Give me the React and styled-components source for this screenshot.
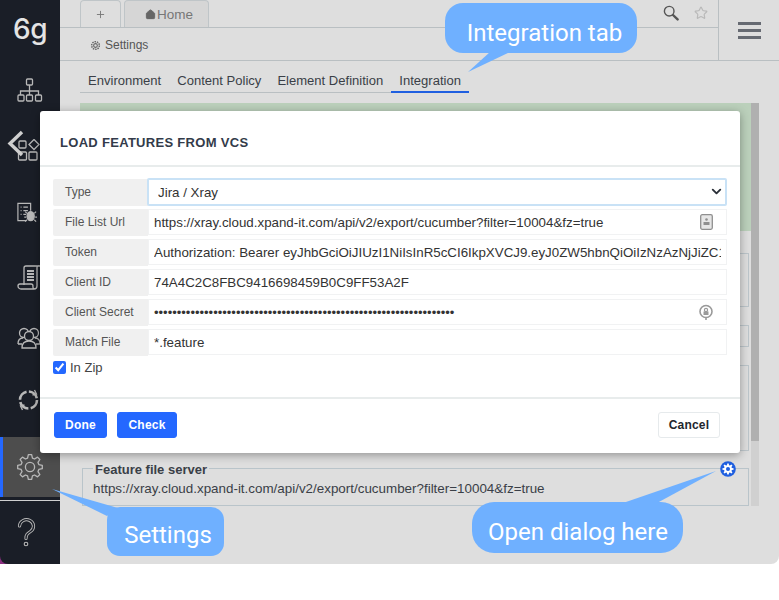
import styled, { createGlobalStyle } from "styled-components"
import { ChevronDown, Home, Plus, Star } from "lucide-react"

const GlobalStyle = createGlobalStyle`
  html, body { margin: 0; padding: 0; background: #fff; }
  body { font-family: "Liberation Sans", Arial, sans-serif; }
  * { box-sizing: border-box; }
`

const fields = [
  { label: "File List Url", value: "https://xray.cloud.xpand-it.com/api/v2/export/cucumber?filter=10004&fz=true", icon: <FileBadgeIcon /> },
  { label: "Token", value: "Authorization: Bearer eyJhbGciOiJIUzI1NiIsInR5cCI6IkpXVCJ9.eyJ0ZW5hbnQiOiIzNzAzNjJiZC1hOTk1" },
  { label: "Client ID", value: "74A4C2C8FBC9416698459B0C9FF53A2F" },
  { label: "Client Secret", value: "•".repeat(66), icon: <SecretIcon />, small: true },
  { label: "Match File", value: "*.feature" },
]

// outline of a cog, 8 teeth by default
function cogPath(teeth, outer, inner, center) {
  const step = (Math.PI * 2) / teeth
  const points = []
  for (let i = 0; i < teeth; i++) {
    const a = i * step - Math.PI / 2
    const at = (r, offset) => `${(center + r * Math.cos(a + offset)).toFixed(2)} ${(center + r * Math.sin(a + offset)).toFixed(2)}`
    points.push(at(inner, -step * 0.34), at(outer, -step * 0.17), at(outer, step * 0.17), at(inner, step * 0.34))
  }
  return `M${points.join("L")}Z`
}

function TreeIcon() {
  return (
    <NavSvg width="26" height="24" viewBox="0 0 26 24">
      <rect x="9.5" y="1" width="6" height="6" rx="1" />
      <path d="M12.5 7v6M3.5 17v-4h18v4M12.5 13v4" />
      <rect x="1" y="17" width="6" height="6" rx="1" />
      <rect x="9.5" y="17" width="6" height="6" rx="1" />
      <rect x="18.5" y="17" width="6" height="6" rx="1" />
    </NavSvg>
  )
}

function BlocksIcon() {
  return (
    <NavSvg width="24" height="24" viewBox="0 0 24 24" $lift={2}>
      <rect x="2" y="2" width="7" height="7" rx="1" />
      <path d="M17 0.5l5 5-5 5-5-5z" />
      <rect x="1.500" y="13" width="8" height="8" rx="1" />
      <rect x="12" y="13" width="8" height="8" rx="1" />
    </NavSvg>
  )
}

function BugDocIcon() {
  return (
    <NavSvg width="20" height="21" viewBox="0 0 22 22" $lift={4}>
      <path d="M15 9V1H1v19h9" />
      <path d="M4 5h1M7 5h5M4 9h1M7 9h5M4 13h1M7 13h3" />
      <ellipse cx="15" cy="15" rx="4" ry="5" fill="#b8b8b8" />
      <path d="M11 12l-2-2M19 12l2-2M10 16H8M20 16h2M11 19l-2 2M19 19l2 2" />
    </NavSvg>
  )
}

function ScrollIcon() {
  return (
    <NavSvg width="24" height="26" viewBox="0 0 24 26" $lift={-4}>
      <path d="M7 20V3a2 2 0 0 1 2-2h14M23 1a2 2 0 0 0-3 2v18a3 3 0 0 1-3 3H4a3 3 0 0 1-3-3 2 2 0 0 1 2-2h11a2 2 0 0 1 2 2 3 3 0 0 0 1 3" />
      <path d="M10 6h7M10 9h7M10 12h7M10 15h7" strokeWidth="1.8" />
    </NavSvg>
  )
}

function UsersIcon() {
  return (
    <NavSvg width="24" height="22" viewBox="0 0 24 22">
      <circle cx="7" cy="6" r="4.500" />
      <circle cx="17" cy="6" r="4.500" />
      <path d="M1 17c0-4 2-6 5-6M23 17c0-4-2-6-5-6M1 17h4M23 17h-4" />
      <circle cx="12" cy="9" r="4.500" fill="#1a1e27" />
      <path d="M5 21c0-5 3-7 7-7s7 2 7 7z" fill="#1a1e27" />
    </NavSvg>
  )
}

function LoopIcon() {
  return (
    <NavSvg width="23" height="22" viewBox="0 0 22 22">
      <circle cx="11" cy="11" r="8.500" strokeWidth="2.6" strokeDasharray="11 2.4" />
      <path d="M17 1l2 4-4 1M5 21l-2-4 4-1" />
    </NavSvg>
  )
}

function GearIcon() {
  return (
    <NavSvg width="26" height="26" viewBox="0 0 26 26">
      <path d={cogPath(8, 12.4, 9.2, 13)} strokeLinejoin="round" />
      <circle cx="13" cy="13" r="4.600" />
    </NavSvg>
  )
}

function HelpIcon() {
  return (
    <svg width="19" height="29" viewBox="0 0 19 29" fill="none" strokeLinecap="round">
      <path d="M2.500 8a7 6.500 0 1 1 11 5.500c-3 2-4.500 3-4.500 7" stroke="#b8b8b8" strokeWidth="3.2" />
      <path d="M2.500 8a7 6.500 0 1 1 11 5.500c-3 2-4.500 3-4.500 7" stroke="#1a1e27" strokeWidth="1.4" />
      <circle cx="9" cy="26" r="1.800" stroke="#b8b8b8" strokeWidth="1.1" />
    </svg>
  )
}

function SmallGearIcon() {
  return (
    <svg width="11" height="11" viewBox="0 0 12 12" fill="none" stroke="#666">
      <circle cx="6" cy="6" r="2" strokeWidth="1.2" />
      <circle cx="6" cy="6" r="4.200" strokeWidth="1.6" strokeDasharray="1.6 1" />
    </svg>
  )
}

function SearchIcon() {
  return (
    <svg width="16" height="16" viewBox="0 0 16 16" fill="none" stroke="#555">
      <circle cx="6.200" cy="6.200" r="4.800" strokeWidth="1.4" />
      <path d="M10 10l4.600 4.400" strokeWidth="2.4" strokeLinecap="round" />
    </svg>
  )
}

function FileBadgeIcon() {
  return (
    <svg width="13" height="16" viewBox="0 0 13 16" fill="#8f8f8f">
      <rect x="0.700" y="0.700" width="11.600" height="14.600" rx="1.500" fill="#e6e6e6" stroke="#8f8f8f" strokeWidth="1.3" />
      <circle cx="6.500" cy="5.500" r="1.300" />
      <rect x="3.500" y="8" width="6" height="3" />
    </svg>
  )
}

function SecretIcon() {
  return (
    <svg width="14" height="17" viewBox="0 0 14 17" fill="none" stroke="#9a9a9a">
      <circle cx="7" cy="7.500" r="6" strokeWidth="1.6" />
      <circle cx="7" cy="6" r="1.600" strokeWidth="1.2" />
      <rect x="4.500" y="7.500" width="5" height="3.500" fill="#9a9a9a" strokeWidth="0" />
      <path d="M7 13v3" strokeWidth="1.6" />
    </svg>
  )
}

function BlueGearIcon() {
  return (
    <svg width="16" height="16" viewBox="0 0 16 16" fill="none">
      <circle cx="8" cy="8" r="7.800" fill="#1f5fe0" />
      <path d={cogPath(8, 5.6, 4, 8)} fill="#fff" />
      <circle cx="8" cy="8" r="2" fill="#1f5fe0" />
    </svg>
  )
}

export default function App() {
  return (
    <>
      <GlobalStyle />
      <Frame>
        <Sidebar>
          <Logo>6g</Logo>
          <NavItem><TreeIcon /></NavItem>
          <NavItem><BlocksIcon /></NavItem>
          <NavItem><BugDocIcon /></NavItem>
          <NavItem><ScrollIcon /></NavItem>
          <NavItem><UsersIcon /></NavItem>
          <NavItem><LoopIcon /></NavItem>
          <NavItem $active><GearIcon /></NavItem>
          <HelpItem><HelpIcon /></HelpItem>
          <Collapse width="18" height="30" viewBox="0 0 18 30">
            <path d="M15 3L3 14.500L15 26" />
          </Collapse>
        </Sidebar>

        <Main>
          <TopBar>
            <TopLeft>
              <TabBar>
                <PageTab $narrow><Plus size={11} /></PageTab>
                <PageTab><Home size={11} fill="#666" stroke="#666" />Home</PageTab>
                <TabTools>
                  <SearchIcon />
                  <Star size={14} color="#b9b9b9" />
                </TabTools>
              </TabBar>
              <Crumb><SmallGearIcon />Settings</Crumb>
            </TopLeft>
            <MenuButton><MenuLine /><MenuLine /><MenuLine /></MenuButton>
          </TopBar>

          <SubNav>
            <SubTab>Environment</SubTab>
            <SubTab>Content Policy</SubTab>
            <SubTab>Element Definition</SubTab>
            <SubTab $active>Integration</SubTab>
          </SubNav>

          <ScrollArea>
            <Content>
              <SuccessBox />
              <GhostBox $height={54} $gap={22} />
              <GhostBox $height={22} $gap={18} />
              <GhostBox $height={86} $gap={18} />
              <FeatureBox>
                <FeatureLegend>Feature file server</FeatureLegend>
                <FeatureUrl>https://xray.cloud.xpand-it.com/api/v2/export/cucumber?filter=10004&amp;fz=true</FeatureUrl>
                <FeatureGear><BlueGearIcon /></FeatureGear>
              </FeatureBox>
            </Content>
            <ScrollTrack><ScrollThumb /></ScrollTrack>
          </ScrollArea>
        </Main>

        <Modal>
          <ModalHeader>LOAD FEATURES FROM VCS</ModalHeader>
          <ModalBody>
            <FormRow>
              <FieldLabel>Type</FieldLabel>
              <SelectWrap>
                <TypeSelect defaultValue="jira">
                  <option value="jira">Jira / Xray</option>
                </TypeSelect>
                <SelectArrow><ChevronDown size={15} strokeWidth={3} color="#2a2f38" /></SelectArrow>
              </SelectWrap>
            </FormRow>
            {fields.map(field => (
              <FormRow key={field.label}>
                <FieldLabel>{field.label}</FieldLabel>
                <InputWrap>
                  <FieldInput readOnly value={field.value} $small={field.small} />
                  {field.icon && <InputIcon>{field.icon}</InputIcon>}
                </InputWrap>
              </FormRow>
            ))}
            <CheckRow>
              <input type="checkbox" defaultChecked />
              In Zip
            </CheckRow>
          </ModalBody>
          <ModalFooter>
            <PrimaryBtn $width={53}>Done</PrimaryBtn>
            <PrimaryBtn $width={60}>Check</PrimaryBtn>
            <CancelBtn>Cancel</CancelBtn>
          </ModalFooter>
        </Modal>

        <Tails viewBox="0 0 779 564" width="779" height="564">
          <polygon points="490,52 510,52 468,72" />
          <polygon points="107,516 118,508 52,489" />
          <polygon points="623,503 657,503 716,471" />
        </Tails>
        <Callout $left={445} $top={3} $width={192} $height={50} $radius={18} $padLeft={7} $padTop={9}>Integration tab</Callout>
        <Callout $left={107} $top={507} $width={117} $height={49} $radius={13} $padLeft={5} $padTop={6}>Settings</Callout>
        <Callout $left={472} $top={502} $width={211} $height={51} $radius={22} $padLeft={1} $padTop={8}>Open dialog here</Callout>
      </Frame>
    </>
  )
}

const Frame = styled.div`
  position: relative;
  display: flex;
  width: 779px;
  height: 564px;
  overflow: hidden;
  background: linear-gradient(90deg, #8a2f80 10px, transparent 10px);
`

const Sidebar = styled.nav`
  position: relative;
  display: flex;
  flex-direction: column;
  flex: none;
  width: 60px;
  border-bottom-left-radius: 8px;
  background: #1a1e27;
`

const Logo = styled.div`
  height: 59px;
  padding-top: 12px;
  font-family: Inter, sans-serif;
  font-size: 28px;
  font-weight: 500;
  line-height: 34px;
  text-align: center;
  letter-spacing: -0.5px;
  color: #e4e4e4;
`

const NavItem = styled.div`
  display: flex;
  align-items: center;
  flex: none;
  height: ${({ $active }) => ($active ? "60px" : "62px")};
  margin-top: ${({ $active }) => ($active ? "6px" : "0")};
  padding-left: ${({ $active }) => ($active ? "14px" : "17px")};
  border-left: ${({ $active }) => ($active ? "3px solid #2468ff" : "none")};
  background: ${({ $active }) => ($active ? "#4d4d4d" : "transparent")};
`

const HelpItem = styled.div`
  display: flex;
  align-items: center;
  flex: 1;
  margin-top: 3px;
  padding-left: 17px;
  border-top: 1px solid #d0d0d0;
`

const NavSvg = styled.svg`
  margin-bottom: ${({ $lift }) => $lift || 0}px;
  fill: none;
  stroke: #b8b8b8;
  stroke-width: 1.3;
`

const Collapse = styled.svg`
  position: absolute;
  left: 7px;
  top: 129px;
  fill: none;
  stroke: #cfcfcf;
  stroke-width: 3.4;
`

const Main = styled.main`
  display: flex;
  flex-direction: column;
  flex: 1;
  min-width: 0;
  border-bottom-right-radius: 8px;
  background: #dedede;
`

const TopBar = styled.header`
  display: flex;
  flex: none;
  height: 61px;
  border-bottom: 1px solid #b9bfc2;
`

const TopLeft = styled.div`
  display: flex;
  flex-direction: column;
  width: 659px;
  border-right: 1px solid #b9bfc2;
`

const TabBar = styled.div`
  display: flex;
  align-items: flex-end;
  gap: 3px;
  height: 28px;
  padding-left: 20px;
  border-bottom: 1px solid #b9bfc2;
`

const PageTab = styled.div`
  display: flex;
  align-items: center;
  justify-content: center;
  gap: 1px;
  width: ${({ $narrow }) => ($narrow ? "41px" : "85px")};
  height: 27px;
  padding-left: ${({ $narrow }) => ($narrow ? "0" : "5px")};
  border: 1px solid #bfc5c8;
  border-bottom: none;
  border-radius: 4px 4px 0 0;
  background: ${({ $narrow }) => ($narrow ? "#dedede" : "#d6d6d6")};
  font-size: 13.5px;
  color: #777;
`

const TabTools = styled.div`
  display: flex;
  align-items: center;
  gap: 15px;
  align-self: flex-start;
  margin-left: auto;
  margin-right: 10px;
  padding-top: 5px;
`

const Crumb = styled.div`
  display: flex;
  align-items: center;
  gap: 4px;
  flex: 1;
  padding: 2px 0 0 30px;
  font-size: 12px;
  color: #555;
`

const MenuButton = styled.div`
  display: flex;
  flex-direction: column;
  gap: 4px;
  flex: 1;
  padding: 22px 18px 0 19px;
`

const MenuLine = styled.span`
  height: 3px;
  background: #666a72;
`

const SubNav = styled.div`
  display: flex;
  align-self: flex-start;
  flex: none;
  height: 32px;
  margin-left: 20px;
  border-bottom: 1px solid #b9bfc2;
`

const SubTab = styled.div`
  padding: 0 8px;
  margin-bottom: ${({ $active }) => ($active ? "-1px" : "0")};
  border-bottom: ${({ $active }) => ($active ? "2px solid #1f5fe0" : "none")};
  font-size: 13.05px;
  line-height: 39px;
  color: #3a3f47;
  height: ${({ $active }) => ($active ? "32px" : "31px")};
  overflow: hidden;
`

const ScrollArea = styled.div`
  display: flex;
  flex: none;
  margin: 10px 0 0 20px;
`

const Content = styled.div`
  flex: none;
  width: 671px;
`

const SuccessBox = styled.div`
  height: 128px;
  background: #bbd0bb;
`

const GhostBox = styled.div`
  height: ${({ $height }) => $height}px;
  margin: ${({ $gap }) => $gap}px 2px 0;
  border: 1px solid #bcc5ca;
`

const FeatureBox = styled.div`
  position: relative;
  height: 38px;
  margin: 17px 2px 0;
  border: 1px solid #b9c4ca;
`

const FeatureLegend = styled.span`
  position: absolute;
  left: 10px;
  top: -7px;
  padding: 0 2px;
  background: #dedede;
  font-size: 13px;
  font-weight: 700;
  color: #3a3f47;
`

const FeatureUrl = styled.div`
  padding: 12px 0 0 10px;
  font-size: 13.4px;
  color: #3a3f47;
`

const FeatureGear = styled.span`
  position: absolute;
  right: 12px;
  top: -8px;
  line-height: 0;
`

const ScrollTrack = styled.div`
  flex: none;
  width: 8px;
  height: 403px;
  background: #d0d0d0;
`

const ScrollThumb = styled.div`
  height: 338px;
  background: #b0b0b0;
`

const Modal = styled.section`
  position: absolute;
  left: 40px;
  top: 111px;
  display: flex;
  flex-direction: column;
  width: 700px;
  height: 342px;
  border-radius: 3px;
  background: #fff;
  box-shadow: 0 2px 10px rgba(0, 0, 0, 0.35);
`

const ModalHeader = styled.h2`
  flex: none;
  height: 56px;
  margin: 0;
  padding: 24px 20px 0;
  border-bottom: 2px solid #e8ecec;
  font-size: 13px;
  font-weight: 700;
  line-height: 15px;
  letter-spacing: 0.3px;
  color: #333b4a;
`

const ModalBody = styled.div`
  display: flex;
  flex-direction: column;
  gap: 3px;
  flex: 1;
  padding: 12px 13px 0;
`

const FormRow = styled.div`
  display: flex;
  flex: none;
  height: 27px;
`

const FieldLabel = styled.div`
  flex: none;
  width: 95px;
  padding-left: 12px;
  border-radius: 2px 0 0 2px;
  background: #f0f0f0;
  font-size: 12px;
  line-height: 26px;
  color: #555;
`

const InputWrap = styled.div`
  position: relative;
  flex: 1;
`

const SelectWrap = styled(InputWrap)``

const TypeSelect = styled.select`
  display: block;
  width: calc(100% + 1px);
  height: 28px;
  margin: -1px 0 0 -1px;
  padding: 0 9px;
  appearance: none;
  border: 2px solid #c9e2f6;
  border-radius: 2px;
  outline: none;
  background: #fff;
  font-family: inherit;
  font-size: 13.33px;
  color: #333;
`

const SelectArrow = styled.span`
  position: absolute;
  right: 3px;
  top: 5px;
  line-height: 0;
`

const FieldInput = styled.input`
  display: block;
  width: 100%;
  height: 26px;
  padding: 0 5px;
  border: 1px solid #f1f2f3;
  outline: none;
  background: #fff;
  font-family: inherit;
  font-size: ${({ $small }) => ($small ? "13px" : "13.33px")};
  color: #333;
`

const InputIcon = styled.span`
  position: absolute;
  right: 14px;
  top: 5px;
  line-height: 0;
`

const CheckRow = styled.label`
  display: flex;
  align-items: center;
  gap: 4px;
  height: 17px;
  margin-top: 0;
  font-size: 13px;
  color: #444;

  input {
    width: 13px;
    height: 13px;
    margin: 0;
    accent-color: #2468ff;
  }
`

const ModalFooter = styled.footer`
  display: flex;
  align-items: flex-start;
  gap: 10px;
  flex: none;
  height: 56px;
  padding: 13px 20px 0 14px;
  border-top: 2px solid #e8ecec;
`

const BaseBtn = styled.button`
  height: 26px;
  padding: 0;
  border-radius: 3px;
  font-family: inherit;
  font-size: 12px;
  font-weight: 700;
  letter-spacing: 0.2px;
`

const PrimaryBtn = styled(BaseBtn)`
  width: ${({ $width }) => $width}px;
  border: 1px solid #2468ff;
  background: #2468ff;
  color: #fff;
`

const CancelBtn = styled(BaseBtn)`
  margin-left: auto;
  width: 62px;
  border: 1px solid #e6eaec;
  background: #fff;
  color: #22262e;
`

const Tails = styled.svg`
  position: absolute;
  left: 0;
  top: 0;
  fill: #6fb0ff;
  pointer-events: none;
`

const Callout = styled.div`
  position: absolute;
  left: ${({ $left }) => $left}px;
  top: ${({ $top }) => $top}px;
  display: flex;
  align-items: center;
  justify-content: center;
  width: ${({ $width }) => $width}px;
  height: ${({ $height }) => $height}px;
  padding: ${({ $padTop }) => $padTop}px 0 0 ${({ $padLeft }) => $padLeft}px;
  border-radius: ${({ $radius }) => $radius}px;
  background: #6fb0ff;
  font-family: Roboto, sans-serif;
  font-size: 24px;
  color: #fff;
`
